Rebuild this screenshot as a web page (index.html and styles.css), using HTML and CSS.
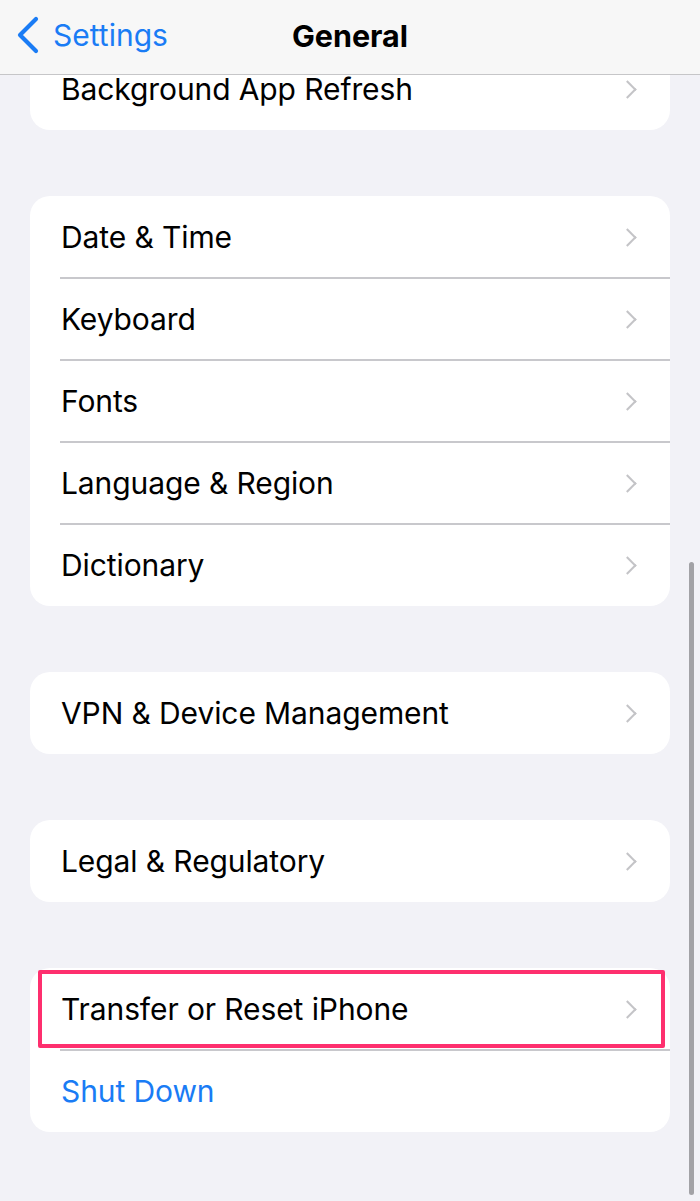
FILE: index.html
```html
<!DOCTYPE html>
<html>
<head>
<meta charset="utf-8">
<link rel="stylesheet" href="styles.css">
</head>
<body>
<div class="screen">
  <header class="nav">
    <div class="back">
      <svg class="back-icon" width="24" height="38" viewBox="0 0 24 38"><path d="M20 3 L4 19 L20 35" fill="none" stroke="#1a7cf5" stroke-width="4.2" stroke-linecap="round" stroke-linejoin="round"/></svg>
      <span>Settings</span>
    </div>
    <div class="title">General</div>
  </header>

  <main class="content">
    <section class="card">
      <div class="row"><span class="label">Background App Refresh</span><span class="chev"></span></div>
    </section>

    <section class="card">
      <div class="row"><span class="label">Date &amp; Time</span><span class="chev"></span></div>
      <div class="row"><span class="label">Keyboard</span><span class="chev"></span></div>
      <div class="row"><span class="label">Fonts</span><span class="chev"></span></div>
      <div class="row"><span class="label">Language &amp; Region</span><span class="chev"></span></div>
      <div class="row"><span class="label">Dictionary</span><span class="chev"></span></div>
    </section>

    <section class="card">
      <div class="row"><span class="label">VPN &amp; Device Management</span><span class="chev"></span></div>
    </section>

    <section class="card">
      <div class="row"><span class="label">Legal &amp; Regulatory</span><span class="chev"></span></div>
    </section>

    <section class="card">
      <div class="row highlighted"><span class="label">Transfer or Reset iPhone</span><span class="chev"></span><span class="mark"></span></div>
      <div class="row"><span class="label blue">Shut Down</span></div>
    </section>
  </main>

  <div class="scrollbar"></div>
</div>
</body>
</html>
```

FILE: styles.css
```css
html, body {
  margin: 0;
  padding: 0;
  background: #f2f2f7;
}
.screen {
  position: relative;
  width: 700px;
  height: 1201px;
  overflow: hidden;
  background: #f2f2f7;
  font-family: "Inter", "Liberation Sans", sans-serif;
}
.nav {
  position: absolute;
  top: 0;
  left: 0;
  right: 0;
  height: 74px;
  background: #f7f7f7;
  border-bottom: 1.5px solid #c6c6c8;
  z-index: 5;
  display: flex;
  align-items: center;
  justify-content: center;
}
.back {
  position: absolute;
  left: 16px;
  top: 16px;
  display: flex;
  align-items: center;
  gap: 13px;
  color: #1a7cf5;
  font-size: 30px;
  height: 38px;
}
.title {
  font-size: 30.5px;
  font-weight: 700;
  color: #000;
  margin-top: -3px;
}
.content {
  padding: 48px 30px 0 30px;
  display: flex;
  flex-direction: column;
  gap: 66px;
}
.card {
  background: #fff;
  border-radius: 20px;
  overflow: visible;
}
.row {
  position: relative;
  height: 82px;
  display: flex;
  align-items: center;
  padding: 0 34px 0 31px;
}
.row + .row::before {
  content: "";
  position: absolute;
  top: -1px;
  left: 30px;
  right: 0;
  height: 1.5px;
  background: #c8c8cc;
}
.label {
  flex: 1;
  font-size: 30px;
  color: #000;
  letter-spacing: -0.1px;
}
.label.blue {
  color: #1a7cf5;
}
.chev {
  width: 11px;
  height: 11px;
  border-top: 2.8px solid #c4c4c7;
  border-right: 2.8px solid #c4c4c7;
  transform: rotate(45deg);
  margin-right: 2px;
}
.mark {
  position: absolute;
  left: 8px;
  right: 5px;
  top: 2px;
  bottom: 2px;
  border: 4px solid #fe2f6e;
  border-radius: 2px;
}
.scrollbar {
  position: absolute;
  left: 689px;
  top: 562px;
  width: 5px;
  height: 633px;
  background: #a2a2a6;
  border-radius: 3px;
}
```
